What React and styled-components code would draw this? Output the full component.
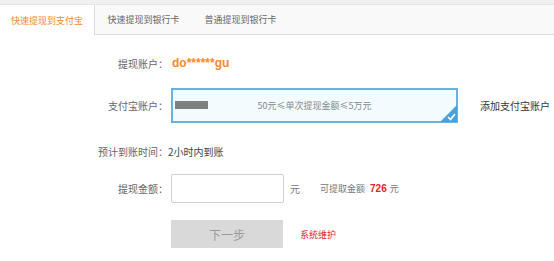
import React from 'react';
import styled, { createGlobalStyle } from 'styled-components';

const GlobalStyle = createGlobalStyle`
  body {
    margin: 0;
    background: #fff;
    font-family: 'Noto Sans CJK SC', 'Liberation Sans', sans-serif;
  }
`;

const Page = styled.div`
  width: 554px;
  height: 261px;
  overflow: hidden;
`;

const TabBar = styled.div`
  display: flex;
  height: 29px;
  margin-top: 4px;
  background: #f9f9f9;
  border-top: 1px solid #e6e6e6;
  border-bottom: 1px solid #dedede;
  box-shadow: 0 -4px 0 #f0f0f0;
`;

const Tab = styled.div`
  width: ${(p) => p.width}px;
  display: flex;
  align-items: center;
  justify-content: center;
  font-size: 9px;
  color: ${(p) => (p.active ? '#f7892b' : '#666')};
  background: ${(p) => (p.active ? '#fff' : 'transparent')};
  border-right: ${(p) => (p.active ? '1px solid #dedede' : 'none')};
  margin-bottom: ${(p) => (p.active ? '-1px' : '0')};
`;

const Form = styled.div`
  padding-top: 18px;
`;

const Row = styled.div`
  display: flex;
  align-items: center;
  margin-top: ${(p) => p.gap || 0}px;
  min-height: 20px;
`;

const Label = styled.div`
  width: 168px;
  flex-shrink: 0;
  text-align: right;
  font-size: 10px;
  color: #666;
`;

const Account = styled.span`
  margin-left: 4px;
  font-family: 'Liberation Sans', Arial, sans-serif;
  font-weight: bold;
  font-size: 12px;
  color: #f7892b;
`;

const SelectBox = styled.div`
  position: relative;
  margin-left: 3px;
  width: 283px;
  height: 31px;
  border: 2px solid #66b2e4;
  background: #f2fbfe;
  display: flex;
  align-items: center;
  justify-content: center;
  font-size: 9px;
  color: #888;
`;

const Mask = styled.div`
  position: absolute;
  left: 2px;
  top: 11px;
  width: 33px;
  height: 8px;
  background: #808080;
`;

const Corner = styled.svg`
  position: absolute;
  right: -1px;
  bottom: -1px;
`;

const AddLink = styled.span`
  margin-left: 22px;
  font-size: 10px;
  color: #333;
`;

const Value = styled.span`
  font-size: 10px;
  color: #444;
`;

const AmountInput = styled.input`
  margin-left: 3px;
  width: 113px;
  height: 29px;
  box-sizing: border-box;
  border: 1px solid #d0d0d0;
  border-radius: 2px;
  background: #fff;
  outline: none;
`;

const Unit = styled.span`
  margin-left: ${(p) => p.gap || 0}px;
  font-size: ${(p) => p.size || 9}px;
  color: #777;
`;

const Available = styled.span`
  margin-left: 5px;
  font-family: 'Liberation Sans', Arial, sans-serif;
  font-weight: bold;
  font-size: 10px;
  color: #e0262b;
`;

const NextButton = styled.button`
  margin-left: 3px;
  width: 112px;
  height: 28px;
  border: none;
  background: #d9d9d9;
  color: #999;
  font-family: inherit;
  font-size: 12px;
  padding: 0;
`;

const Notice = styled.span`
  margin-left: 17px;
  font-size: 9px;
  color: #e0262b;
`;

const App = () => {
  return (
    <Page>
      <GlobalStyle />
      <TabBar>
        <Tab active width={94}>快速提现到支付宝</Tab>
        <Tab width={97}>快速提现到银行卡</Tab>
        <Tab width={97}>普通提现到银行卡</Tab>
      </TabBar>
      <Form>
        <Row>
          <Label>提现账户：</Label>
          <Account>do******gu</Account>
        </Row>
        <Row gap={15}>
          <Label>支付宝账户：</Label>
          <SelectBox>
            <Mask />
            <span>50元≤单次提现金额≤5万元</span>
            <Corner width="17" height="17" viewBox="0 0 17 17">
              <polygon points="17,0 17,17 0,17" fill="#4aa0dd" />
              <polyline points="8,12 10.5,14.5 15,9" fill="none" stroke="#fff" strokeWidth="1.6" />
            </Corner>
          </SelectBox>
          <AddLink>添加支付宝账户</AddLink>
        </Row>
        <Row gap={18}>
          <Label>预计到账时间：</Label>
          <Value>2小时内到账</Value>
        </Row>
        <Row gap={13}>
          <Label>提现金额：</Label>
          <AmountInput />
          <Unit gap={6} size={10}>元</Unit>
          <Unit gap={20}>可提取金额</Unit>
          <Available>726</Available>
          <Unit gap={3}>元</Unit>
        </Row>
        <Row gap={17}>
          <Label />
          <NextButton>下一步</NextButton>
          <Notice>系统维护</Notice>
        </Row>
      </Form>
    </Page>
  );
};

export default App;
